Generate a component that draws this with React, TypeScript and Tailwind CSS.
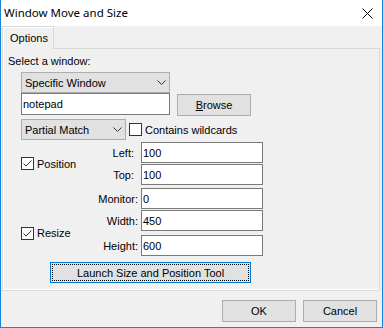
import React from "react";

function Chevron() {
  return (
    <svg width="9" height="5" viewBox="0 0 9 5" className="shrink-0">
      <path d="M0.5 0.5 L4.5 4.5 L8.5 0.5" fill="none" stroke="#333" strokeWidth="1" />
    </svg>
  );
}

function Check({ checked }: { checked: boolean }) {
  return (
    <div className="w-[13px] h-[13px] border border-[#333] bg-white shrink-0 flex items-center justify-center">
      {checked && (
        <svg width="11" height="11" viewBox="0 0 11 11">
          <path d="M1.5 5.5 L4 8 L9.5 2.5" fill="none" stroke="#333" strokeWidth="1" />
        </svg>
      )}
    </div>
  );
}

function Combo({ text, w }: { text: string; w: string }) {
  return (
    <div className={`${w} h-[21px] bg-[#e1e1e1] border border-[#adadad] flex items-center justify-between pl-[3px] pr-[3px]`}>
      <span>{text}</span>
      <Chevron />
    </div>
  );
}

function Field({ value }: { value: string }) {
  return (
    <div className="w-[122px] h-[21px] bg-white border border-[#7a7a7a] flex items-center pl-[1px]">
      {value}
    </div>
  );
}

function Btn({ children, w }: { children: React.ReactNode; w: string }) {
  return (
    <div className={`${w} h-[22px] bg-[#e1e1e1] border border-[#adadad] flex items-center justify-center`}>
      {children}
    </div>
  );
}

function Lbl({ text, r }: { text: string; r: string }) {
  return (
    <span className="w-[0px] relative">
      <span className={`absolute ${r} -top-[8px] whitespace-nowrap`}>{text}</span>
    </span>
  );
}

export default function App() {
  return (
    <div className="w-[383px] h-[328px] bg-[#f0f0f0] border-x border-b border-[#1883d7] flex flex-col font-['Liberation_Sans',Arial,sans-serif] text-[11px] leading-[16px] text-black overflow-hidden">
      <div className="h-[26px] bg-white flex items-center justify-between pl-[3px] pr-[9px] shrink-0 font-['Noto_Sans',sans-serif] text-[11.5px]">
        <span>Window Move and Size</span>
        <svg width="11" height="11" viewBox="0 0 11 11">
          <path d="M0.5 0.5 L10.5 10.5 M10.5 0.5 L0.5 10.5" stroke="#000" strokeWidth="1" />
        </svg>
      </div>
      <div className="flex shrink-0">
        <div className="ml-[1px] w-[52px] h-[23px] -mb-[1px] relative z-10 bg-[#f0f0f0] border-t border-x border-[#d9d9d9] shadow-[inset_1px_1px_0_#fff] flex items-center pl-[7px]">
          Options
        </div>
      </div>
      <div className="ml-[1px] mr-[2px] h-[243px] border border-[#d9d9d9] shadow-[inset_1px_0_0_#fff,inset_0_-1px_0_#fff] flex flex-col shrink-0">
        <div className="mt-[4px] ml-[5px]">Select a window:</div>
        <div className="mt-[3px] ml-[18px]">
          <Combo text="Specific Window" w="w-[149px]" />
        </div>
        <div className="ml-[18px] flex items-start">
          <div className="w-[149px] h-[22px] bg-white border border-[#7a7a7a] flex items-center pl-[1px]">notepad</div>
          <div className="ml-[7px] mt-[1px]">
            <Btn w="w-[74px]">
              <span><span className="underline">B</span>rowse</span>
            </Btn>
          </div>
        </div>
        <div className="mt-[3px] ml-[18px] flex items-center">
          <Combo text="Partial Match" w="w-[105px]" />
          <div className="ml-[3px]"><Check checked={false} /></div>
          <span className="ml-[3px]">Contains wildcards</span>
        </div>
        <div className="mt-[2px] ml-[18px] flex items-center">
          <div className="w-[120px] flex items-center">
            <Check checked={true} />
            <span className="ml-[3px]">Position</span>
          </div>
          <div className="flex flex-col gap-[1px]">
            <div className="flex items-center">
              <Lbl text="Left:" r="right-[7px]" />
              <Field value="100" />
            </div>
            <div className="flex items-center">
              <Lbl text="Top:" r="right-[7px]" />
              <Field value="100" />
            </div>
          </div>
        </div>
        <div className="mt-[3px] ml-[138px] flex items-center">
          <Lbl text="Monitor:" r="right-[3px]" />
          <Field value="0" />
        </div>
        <div className="mt-[1px] ml-[18px] flex items-center">
          <div className="w-[120px] flex items-center">
            <Check checked={true} />
            <span className="ml-[3px]">Resize</span>
          </div>
          <div className="flex flex-col gap-[4px]">
            <div className="flex items-center">
              <Lbl text="Width:" r="right-[3px]" />
              <Field value="450" />
            </div>
            <div className="flex items-center">
              <Lbl text="Height:" r="right-[3px]" />
              <Field value="600" />
            </div>
          </div>
        </div>
        <div className="mt-[6px] ml-[47px] w-[201px] h-[21px] bg-[#e1e1e1] border border-[#0078d7] p-[1px]">
          <div className="w-full h-full border border-dotted border-black flex items-center justify-center">
            Launch Size and Position Tool
          </div>
        </div>
      </div>
      <div className="flex justify-end gap-[7px] mt-[9px] mr-[5px]">
        <Btn w="w-[74px]">OK</Btn>
        <Btn w="w-[74px]">Cancel</Btn>
      </div>
    </div>
  );
}
